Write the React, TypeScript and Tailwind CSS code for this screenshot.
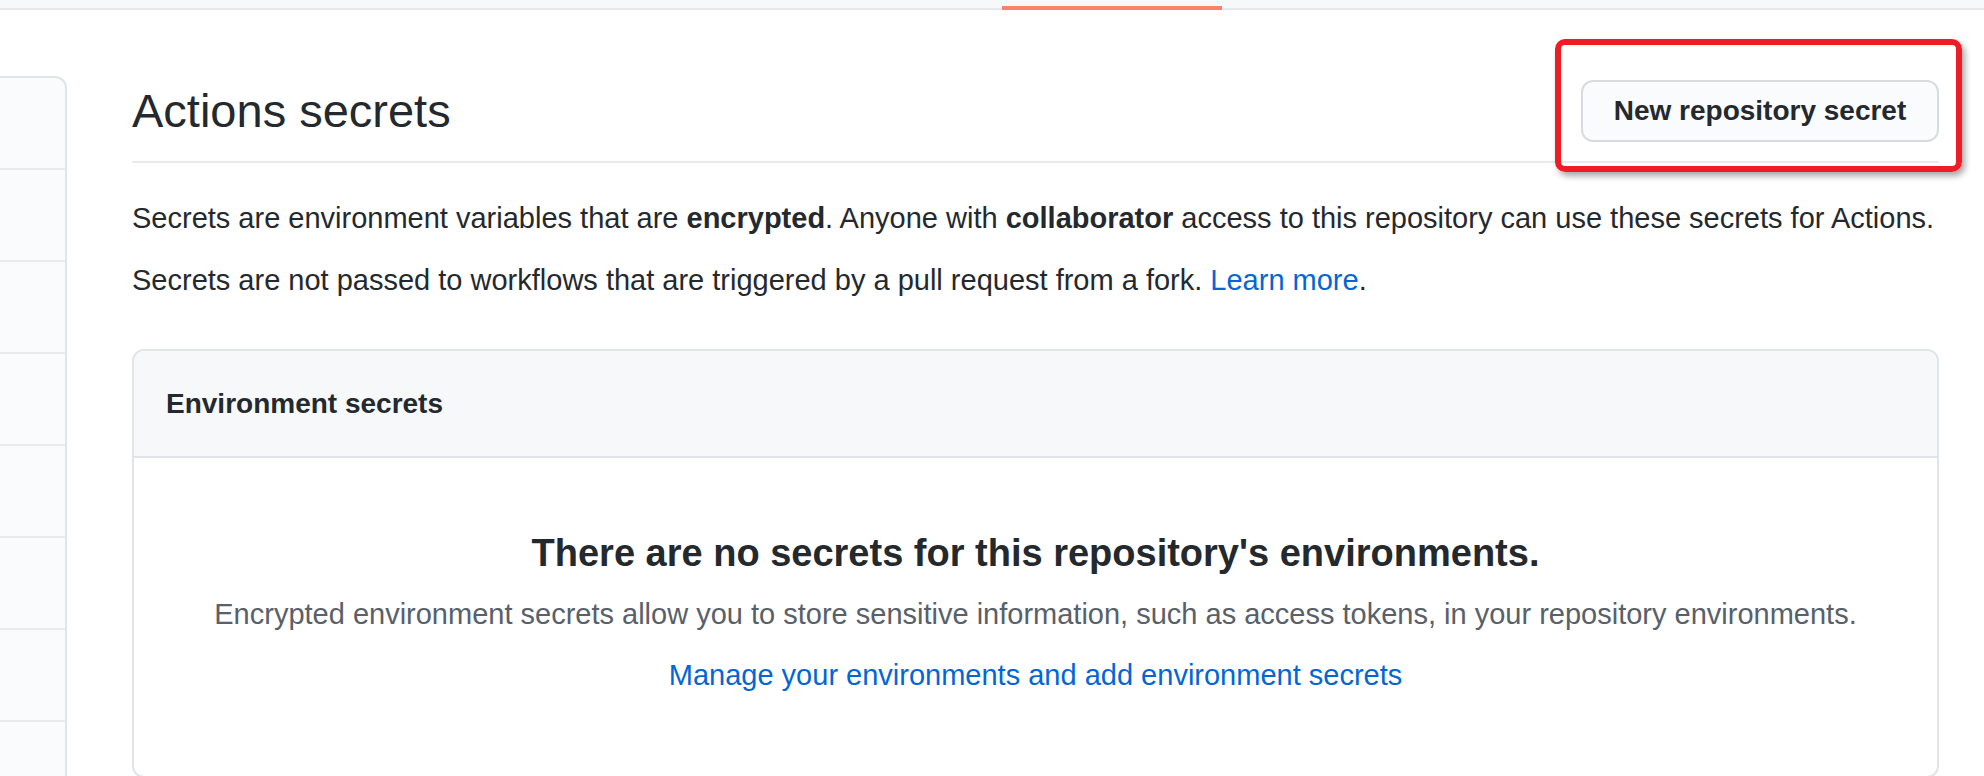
import React from "react";

export default function App() {
  const rows = [0, 1, 2, 3, 4, 5, 6, 7];
  return (
    <div className="relative w-[1984px] h-[776px] overflow-hidden bg-white text-[#24292e] font-['Liberation_Sans',Arial,sans-serif]">
      {/* top bar */}
      <div className="relative h-[10px] bg-[#f6f8fa] border-b-2 border-[#e6e8eb]">
        <div className="absolute left-[1002px] bottom-[-2px] w-[220px] h-[4px] bg-[#f9826c]" />
      </div>

      <div className="flex">
        {/* sidebar */}
        <div className="w-[67px] mt-[66px] shrink-0 flex flex-col bg-[#fafbfc] border-t-2 border-r-2 border-[#e1e4e8] rounded-tr-[12px]">
          {rows.map((r) => (
            <div key={r} className="h-[92px] border-b-2 border-[#e8eaed]" />
          ))}
        </div>

        {/* main */}
        <div className="ml-[65px] w-[1807px] pt-[65px]">
          <div className="flex items-center justify-between pb-[14px] border-b-2 border-[#e8eaed]">
            <h1 className="text-[47px] leading-[72px] font-normal">Actions secrets</h1>
            <button className="h-[62px] w-[358px] rounded-[12px] border-2 border-[#d8dce0] bg-[#fafbfc] text-[28px] font-bold text-[#24292e]">
              New repository secret
            </button>
          </div>

          <p className="mt-[34px] text-[29px] leading-[42px]">
            Secrets are environment variables that are <b>encrypted</b>. Anyone with <b>collaborator</b> access to this repository can use these secrets for Actions.
          </p>
          <p className="mt-[20px] text-[29px] leading-[42px]">
            Secrets are not passed to workflows that are triggered by a pull request from a fork. <span className="text-[#0366d6]">Learn more</span>.
          </p>

          <div className="mt-[48px] border-2 border-[#e1e4e8] rounded-[12px] overflow-hidden">
            <div className="h-[107px] flex items-center px-[32px] bg-[#f6f8fa] border-b-2 border-[#e1e4e8]">
              <h3 className="text-[28px] font-bold">Environment secrets</h3>
            </div>
            <div className="pt-[71px] pb-[80px] flex flex-col items-center text-center">
              <h3 className="text-[38px] leading-[48px] font-bold">There are no secrets for this repository's environments.</h3>
              <p className="mt-[16px] text-[29px] leading-[42px] text-[#586069]">
                Encrypted environment secrets allow you to store sensitive information, such as access tokens, in your repository environments.
              </p>
              <p className="mt-[19px] text-[29px] leading-[42px] text-[#0366d6]">
                Manage your environments and add environment secrets
              </p>
            </div>
          </div>
        </div>
      </div>

      {/* red annotation box */}
      <div className="absolute left-[1555px] top-[39px] w-[407px] h-[133px] border-[6px] border-[#ee1c25] rounded-[10px] shadow-[3px_4px_6px_rgba(0,0,0,0.35)]" />
    </div>
  );
}
